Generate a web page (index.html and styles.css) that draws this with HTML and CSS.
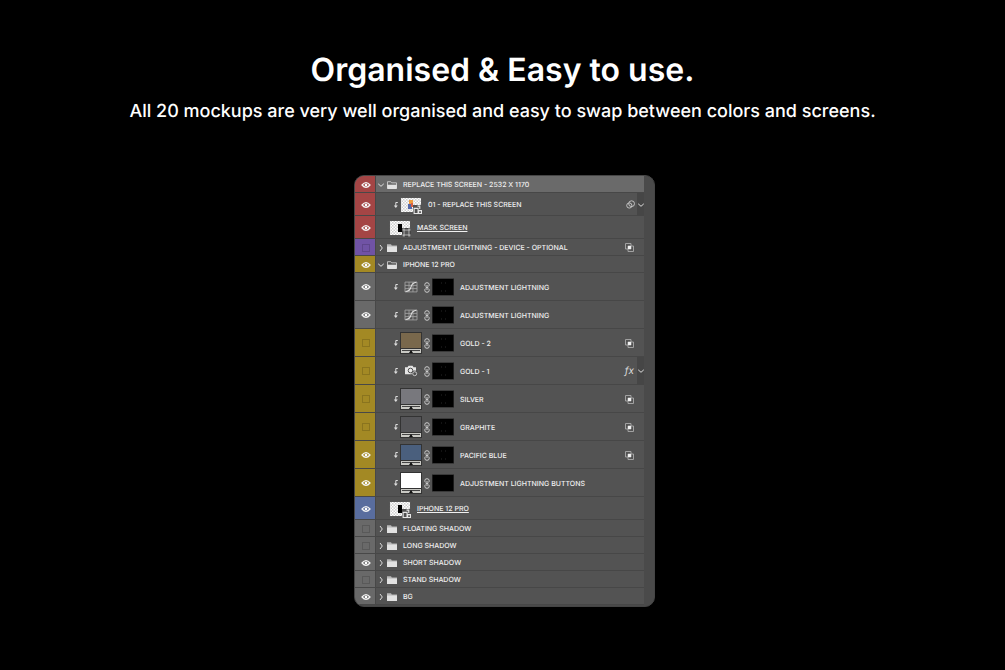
FILE: index.html
```html
<!DOCTYPE html>
<html lang="en">
<head>
  <meta charset="UTF-8">
  <meta name="viewport" content="width=device-width, initial-scale=1.0">
  <title>Organised &amp; Easy to use</title>
  <link rel="stylesheet" href="styles.css">
</head>
<body>
  <svg class="sprite" aria-hidden="true">
    <defs>
      <pattern id="checker" width="3" height="3" patternUnits="userSpaceOnUse">
        <rect width="3" height="3" fill="#fff"/>
        <path d="M0 0h1.5v1.5H0zM1.5 1.5H3V3H1.5z" fill="#cfcfcf"/>
      </pattern>
      <symbol id="eye" viewBox="0 0 10 8">
        <path d="M1 4Q5-.6 9 4Q5 8.600 1 4z" fill="none" stroke="#f4f4f4" stroke-width="1.200"/>
        <circle cx="5" cy="4" r="1.300" fill="#fff"/>
      </symbol>
      <symbol id="right" viewBox="0 0 6 8">
        <path d="M2 1L4.300 4L2 7" fill="none" stroke="#ddd" stroke-width="1"/>
      </symbol>
      <symbol id="down" viewBox="0 0 6 8">
        <path d="M.2 2.800L3 5.300L5.800 2.800" fill="none" stroke="#ddd" stroke-width="1"/>
      </symbol>
      <symbol id="folder" viewBox="0 0 10 8">
        <path d="M0 .3h4l.8 1.100H10v1H0z" fill="#b8b8b8"/>
        <path d="M0 2.300h10V8H0z" fill="#e2e2e2"/>
      </symbol>
      <symbol id="folder-open" viewBox="0 0 10 8">
        <path d="M.5 7V.7h3.300l.8 1.100h4.900V7" fill="none" stroke="#ccc" stroke-width=".9"/>
        <path d="M.2 3.700h9.600V8H.2z" fill="#e2e2e2"/>
      </symbol>
      <symbol id="clip" viewBox="0 0 6 8">
        <path d="M4.800 1.500H2.800V5" fill="none" stroke="#ddd" stroke-width="1"/>
        <path d="M.8 4.400h4L2.800 7z" fill="#ddd"/>
      </symbol>
      <symbol id="link" viewBox="0 0 6 11">
        <g fill="none" stroke="#ccc" stroke-width="1">
          <path d="M1.700 4.500Q.8 4 .8 2.700Q.8.700 3 .7T5.200 2.700Q5.200 4 4.300 4.500"/>
          <path d="M1.700 6.500Q.8 7 .8 8.300Q.8 10.300 3 10.300T5.200 8.300Q5.200 7 4.300 6.500"/>
          <path d="M3 3v5M1.800 5.500h2.400"/>
        </g>
      </symbol>
      <symbol id="curves" viewBox="0 0 12 11">
        <path d="M.5 1h11v9H.5zM4.200 1v9M7.800 1v9M.5 4h11M.5 7h11" fill="none" stroke="#a2a2a2" stroke-width=".8"/>
        <path d="M1 9.700Q5 9.300 6 5.500T11 1.200" fill="none" stroke="#ddd" stroke-width="1"/>
      </symbol>
      <symbol id="camera" viewBox="0 0 14 12">
        <path d="M1 2.300h2.500L4.500.800h4l1 1.500H12v7H1z" fill="#e5e5e5"/>
        <circle cx="6.500" cy="5.500" r="2.300" fill="none" stroke="#505050" stroke-width="1"/>
        <circle cx="10.700" cy="8.700" r="2.200" fill="#777" stroke="#505050" stroke-width="1.800"/>
        <circle cx="10.700" cy="8.700" r="2" fill="#505050" stroke="#ddd" stroke-width=".8"/>
      </symbol>
      <symbol id="mask" viewBox="0 0 22 18">
        <path d="M0 .5h22v17H0z" fill="#000" stroke="#393939"/>
        <path d="M9 5h1M13 5h1M9 13h1M13 13h1" stroke="#303030" stroke-width=".8"/>
      </symbol>
      <symbol id="slider" viewBox="0 0 20 4">
        <path d="M0 0h20v4H0z" fill="#c9c9c4"/>
        <path d="M1 1.500h18" stroke="#444" stroke-width="1"/>
        <path d="M8 4L10 1L12 4z" fill="#111"/>
      </symbol>
      <symbol id="smart" viewBox="0 0 8 8">
        <path d="M0 0h8v8H0z" fill="#505050"/>
        <path d="M1 3h3.500v4.500H1zM4 1h2v2.500M5 5h2.500v2.500H5z" fill="none" stroke="#e5e5e5" stroke-width="1"/>
      </symbol>
      <symbol id="vector" viewBox="0 0 8 8">
        <path d="M0 0h8v8H0z" fill="#444"/>
        <path d="M1.800 1.800h4.400v4.400H1.800z" fill="#555" stroke="#bbb" stroke-width=".8"/>
        <path d="M.5.500h2v2h-2zM5.500.500h2v2h-2zM.5 5.500h2v2h-2zM5.500 5.500h2v2h-2z" fill="#aaa"/>
      </symbol>
      <symbol id="blend" viewBox="0 0 9 9">
        <path d="M.5.500H6V6H.5zM3 3h5.500v5.500H3z" fill="none" stroke="#aaa" stroke-width=".9"/>
        <path d="M3 3h3v3H3z" fill="#f2f2f2"/>
      </symbol>
      <symbol id="rings" viewBox="0 0 9 9">
        <g fill="none" stroke="#ccc" stroke-width=".9">
          <circle cx="5.600" cy="3.700" r="2.900"/>
          <circle cx="3.300" cy="5.500" r="2.600"/>
        </g>
      </symbol>
    </defs>
  </svg>

  <header class="intro">
    <h1>Organised &amp; Easy to use.</h1>
    <p>All 20 mockups are very well organised and easy to swap between colors and screens.</p>
  </header>

  <main class="stage">
    <ul class="panel">
      <li class="layer selected">
        <button class="eye red" aria-label="Hide layer"><svg><use href="#eye"/></svg></button>
        <div class="body">
          <button class="toggle" aria-label="Collapse group"><svg><use href="#down"/></svg></button>
          <svg class="folder"><use href="#folder-open"/></svg>
          <span class="name">REPLACE THIS SCREEN - 2532 X 1170</span>
        </div>
      </li>
      <li class="layer medium">
        <button class="eye red" aria-label="Hide layer"><svg><use href="#eye"/></svg></button>
        <div class="body clipped">
          <svg class="clip"><use href="#clip"/></svg>
          <svg class="thumb" viewBox="0 0 22 18">
            <path d="M.5 1.500h21v15H.5z" fill="url(#checker)" stroke="#444" stroke-width=".8"/>
            <path d="M9 4h4v4H9z" fill="#ef9b3d"/>
            <path d="M8 8h4v5H8z" fill="#5568a8"/>
            <path d="M11 7h2v4h-2z" fill="#d85f43"/>
            <use href="#smart" x="13" y="9" width="9" height="9"/>
          </svg>
          <span class="name">01 - REPLACE THIS SCREEN</span>
          <svg class="mode"><use href="#rings"/></svg>
          <button class="more" aria-label="Show filters"><svg><use href="#down"/></svg></button>
        </div>
      </li>
      <li class="layer medium">
        <button class="eye red" aria-label="Hide layer"><svg><use href="#eye"/></svg></button>
        <div class="body nested">
          <svg class="thumb" viewBox="0 0 22 18">
            <path d="M.5 1.500h21v15H.5z" fill="url(#checker)" stroke="#444" stroke-width=".8"/>
            <path d="M9 5h4v8H9z" fill="#000"/>
            <use href="#vector" x="13" y="9" width="9" height="9"/>
          </svg>
          <span class="name underlined">MASK SCREEN</span>
        </div>
      </li>
      <li class="layer">
        <button class="eye purple" aria-label="Show layer"><i></i></button>
        <div class="body">
          <button class="toggle" aria-label="Expand group"><svg><use href="#right"/></svg></button>
          <svg class="folder"><use href="#folder"/></svg>
          <span class="name">ADJUSTMENT LIGHTNING - DEVICE - OPTIONAL</span>
          <svg class="mode"><use href="#blend"/></svg>
        </div>
      </li>
      <li class="layer">
        <button class="eye yellow" aria-label="Hide layer"><svg><use href="#eye"/></svg></button>
        <div class="body">
          <button class="toggle" aria-label="Collapse group"><svg><use href="#down"/></svg></button>
          <svg class="folder"><use href="#folder-open"/></svg>
          <span class="name">IPHONE 12 PRO</span>
        </div>
      </li>
      <li class="layer large">
        <button class="eye" aria-label="Hide layer"><svg><use href="#eye"/></svg></button>
        <div class="body clipped">
          <svg class="clip"><use href="#clip"/></svg>
          <svg class="adjust"><use href="#curves"/></svg>
          <svg class="link"><use href="#link"/></svg>
          <svg class="thumb"><use href="#mask"/></svg>
          <span class="name">ADJUSTMENT LIGHTNING</span>
        </div>
      </li>
      <li class="layer large">
        <button class="eye" aria-label="Hide layer"><svg><use href="#eye"/></svg></button>
        <div class="body clipped">
          <svg class="clip"><use href="#clip"/></svg>
          <svg class="adjust"><use href="#curves"/></svg>
          <svg class="link"><use href="#link"/></svg>
          <svg class="thumb"><use href="#mask"/></svg>
          <span class="name">ADJUSTMENT LIGHTNING</span>
        </div>
      </li>
      <li class="layer large">
        <button class="eye yellow" aria-label="Show layer"><i></i></button>
        <div class="body clipped">
          <svg class="clip"><use href="#clip"/></svg>
          <span class="fill gold"><svg><use href="#slider"/></svg></span>
          <svg class="link"><use href="#link"/></svg>
          <svg class="thumb"><use href="#mask"/></svg>
          <span class="name">GOLD - 2</span>
          <svg class="mode"><use href="#blend"/></svg>
        </div>
      </li>
      <li class="layer large">
        <button class="eye yellow" aria-label="Show layer"><i></i></button>
        <div class="body clipped">
          <svg class="clip"><use href="#clip"/></svg>
          <svg class="adjust"><use href="#camera"/></svg>
          <svg class="link"><use href="#link"/></svg>
          <svg class="thumb"><use href="#mask"/></svg>
          <span class="name">GOLD - 1</span>
          <span class="fx">fx</span>
          <button class="more" aria-label="Show effects"><svg><use href="#down"/></svg></button>
        </div>
      </li>
      <li class="layer large">
        <button class="eye yellow" aria-label="Show layer"><i></i></button>
        <div class="body clipped">
          <svg class="clip"><use href="#clip"/></svg>
          <span class="fill silver"><svg><use href="#slider"/></svg></span>
          <svg class="link"><use href="#link"/></svg>
          <svg class="thumb"><use href="#mask"/></svg>
          <span class="name">SILVER</span>
          <svg class="mode"><use href="#blend"/></svg>
        </div>
      </li>
      <li class="layer large">
        <button class="eye yellow" aria-label="Show layer"><i></i></button>
        <div class="body clipped">
          <svg class="clip"><use href="#clip"/></svg>
          <span class="fill graphite"><svg><use href="#slider"/></svg></span>
          <svg class="link"><use href="#link"/></svg>
          <svg class="thumb"><use href="#mask"/></svg>
          <span class="name">GRAPHITE</span>
          <svg class="mode"><use href="#blend"/></svg>
        </div>
      </li>
      <li class="layer large">
        <button class="eye yellow" aria-label="Hide layer"><svg><use href="#eye"/></svg></button>
        <div class="body clipped">
          <svg class="clip"><use href="#clip"/></svg>
          <span class="fill pacific"><svg><use href="#slider"/></svg></span>
          <svg class="link"><use href="#link"/></svg>
          <svg class="thumb"><use href="#mask"/></svg>
          <span class="name">PACIFIC BLUE</span>
          <svg class="mode"><use href="#blend"/></svg>
        </div>
      </li>
      <li class="layer large">
        <button class="eye yellow" aria-label="Hide layer"><svg><use href="#eye"/></svg></button>
        <div class="body clipped">
          <svg class="clip"><use href="#clip"/></svg>
          <span class="fill white"><svg><use href="#slider"/></svg></span>
          <svg class="link"><use href="#link"/></svg>
          <svg class="thumb" viewBox="0 0 22 18"><path d="M0 .5h22v17H0z" fill="#000" stroke="#393939"/></svg>
          <span class="name">ADJUSTMENT LIGHTNING BUTTONS</span>
        </div>
      </li>
      <li class="layer medium">
        <button class="eye blue" aria-label="Hide layer"><svg><use href="#eye"/></svg></button>
        <div class="body nested">
          <svg class="thumb" viewBox="0 0 22 18">
            <path d="M.5 1.500h21v15H.5z" fill="url(#checker)" stroke="#444" stroke-width=".8"/>
            <path d="M9 5h4v8H9z" fill="#000"/>
            <use href="#smart" x="13" y="9" width="9" height="9"/>
          </svg>
          <span class="name underlined">IPHONE 12 PRO</span>
        </div>
      </li>
      <li class="layer">
        <button class="eye" aria-label="Show layer"><i></i></button>
        <div class="body">
          <button class="toggle" aria-label="Expand group"><svg><use href="#right"/></svg></button>
          <svg class="folder"><use href="#folder"/></svg>
          <span class="name">FLOATING SHADOW</span>
        </div>
      </li>
      <li class="layer">
        <button class="eye" aria-label="Show layer"><i></i></button>
        <div class="body">
          <button class="toggle" aria-label="Expand group"><svg><use href="#right"/></svg></button>
          <svg class="folder"><use href="#folder"/></svg>
          <span class="name">LONG SHADOW</span>
        </div>
      </li>
      <li class="layer">
        <button class="eye" aria-label="Hide layer"><svg><use href="#eye"/></svg></button>
        <div class="body">
          <button class="toggle" aria-label="Expand group"><svg><use href="#right"/></svg></button>
          <svg class="folder"><use href="#folder"/></svg>
          <span class="name">SHORT SHADOW</span>
        </div>
      </li>
      <li class="layer">
        <button class="eye" aria-label="Show layer"><i></i></button>
        <div class="body">
          <button class="toggle" aria-label="Expand group"><svg><use href="#right"/></svg></button>
          <svg class="folder"><use href="#folder"/></svg>
          <span class="name">STAND SHADOW</span>
        </div>
      </li>
      <li class="layer">
        <button class="eye" aria-label="Hide layer"><svg><use href="#eye"/></svg></button>
        <div class="body">
          <button class="toggle" aria-label="Expand group"><svg><use href="#right"/></svg></button>
          <svg class="folder"><use href="#folder"/></svg>
          <span class="name">BG</span>
        </div>
      </li>
    </ul>
  </main>
</body>
</html>
```

FILE: styles.css
```css
* {
  box-sizing: border-box;
}
body {
  margin: 0;
  padding: 48px 16px;
  background: #000;
  color: #fff;
  font-family: Inter, "Liberation Sans", sans-serif;
  text-rendering: geometricPrecision;
}
.sprite {
  position: absolute;
  width: 0;
  height: 0;
}
svg {
  display: block;
  flex: none;
}
button {
  padding: 0;
  border: 0;
  background: none;
  cursor: pointer;
}
.intro {
  text-align: center;
}
.intro h1 {
  margin: 0;
  font-size: 32px;
  line-height: 44px;
  font-weight: 600;
}
.intro p {
  margin: 8px 0 0;
  font-size: 18px;
  line-height: 24px;
  font-weight: 500;
}

/* layers panel */
.stage {
  padding: 51px 0 0 4px;
}
.panel {
  max-width: 301px;
  margin: 0 auto;
  padding: 0 10px 1px 0;
  border: 1px solid #454545;
  border-radius: 10px;
  background: #4a4a4a;
  overflow: hidden;
  list-style: none;
  font-size: 7px;
  line-height: 9px;
  font-weight: 500;
}
.layer {
  display: flex;
  min-height: 17px;
  background: #535353;
}
.layer.medium {
  min-height: 23px;
}
.layer.large {
  min-height: 28px;
}
.layer.selected {
  background: #6a6a6a;
}
.eye {
  display: flex;
  align-items: center;
  justify-content: center;
  flex: none;
  width: 21px;
  background: #696969;
  box-shadow: inset -1px -1px #484848;
}
.eye svg {
  width: 10px;
  height: 8px;
}
.eye i {
  width: 8px;
  height: 8px;
  border: 1px solid rgba(0, 0, 0, 0.15);
}
.eye.red { background: #a44545; }
.eye.purple { background: #7053a5; }
.eye.yellow { background: #a38924; }
.eye.blue { background: #596d9e; }

.body {
  display: flex;
  align-items: center;
  flex: 1;
  min-width: 0;
  padding-left: 2px;
  box-shadow: inset 0 -1px #474747;
}
.body.clipped {
  padding-left: 17px;
}
.body.nested {
  padding-left: 13px;
}
.toggle {
  margin-right: 3px;
}
.toggle svg,
.clip,
.more svg {
  width: 6px;
  height: 8px;
}
.folder {
  width: 10px;
  height: 8px;
}
.name {
  flex: 1;
  margin-left: 6px;
  color: #f0f0f0;
  white-space: nowrap;
}
.underlined {
  text-decoration: underline;
  text-underline-offset: 1px;
}
.clip {
  margin-right: 1px;
}
.thumb {
  width: 22px;
  height: 18px;
}
.adjust {
  width: 22px;
  height: 12px;
}
.link {
  width: 6px;
  height: 11px;
  margin: 0 2px;
}
.fill {
  display: flex;
  align-items: flex-end;
  width: 22px;
  height: 22px;
  border: 1px solid #333;
}
.fill svg {
  width: 20px;
  height: 5px;
  border-top: 1px solid #333;
}
.gold { background: #79684c; }
.silver { background: #78787d; }
.graphite { background: #555558; }
.pacific { background: #4a5f7d; }
.white { background: #fff; }

.mode {
  width: 9px;
  height: 9px;
  margin-right: 10px;
}
.fx {
  margin-right: 3px;
  color: #ddd;
  font-size: 10px;
  font-style: italic;
  font-weight: 400;
}
.more {
  display: flex;
  align-items: center;
  justify-content: center;
  align-self: stretch;
  width: 7px;
  background: #464646;
}
.mode + .more {
  margin-left: -8px;
}
```
